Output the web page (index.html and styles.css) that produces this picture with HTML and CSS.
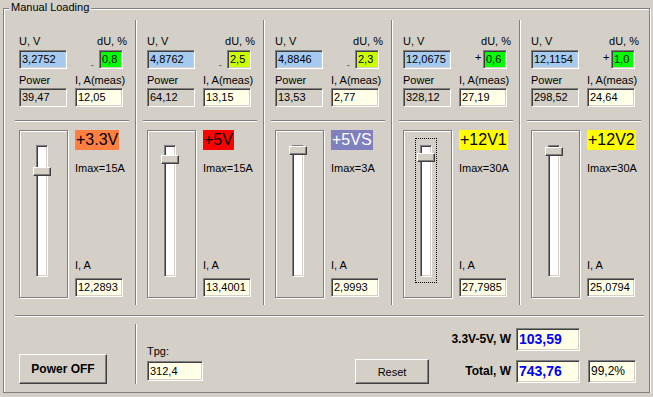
FILE: index.html
```html
<!DOCTYPE html>
<html lang="en">
<head>
  <meta charset="UTF-8">
  <title>Manual Loading</title>
  <link rel="stylesheet" href="styles.css">
</head>
<body>
  <div class="group">
    <div class="group-title">Manual Loading</div>

    <div class="panels">
      <!-- +3.3V -->
      <div class="panel">
        <div class="lbl-row"><span>U, V</span><span class="du">dU, %</span></div>
        <div class="box-row">
          <div class="edit blue">3,2752</div>
          <span class="sign minus">-</span>
          <div class="edit small green">0,8</div>
        </div>
        <div class="row2 lbl2"><span>Power</span><span>I, A(meas)</span></div>
        <div class="row2">
          <div class="edit">39,47</div>
          <div class="edit cream">12,05</div>
        </div>
        <div class="hsep"></div>
        <div class="slider-row">
          <div class="frame">
            <div class="trackbar"><div class="track"><div class="thumb" style="top:21px"></div></div></div>
          </div>
          <div class="side">
            <div class="tag orange">+3.3V</div>
            <div class="imax">Imax=15A</div>
            <div class="ia">I, A</div>
            <div class="edit cream">12,2893</div>
          </div>
        </div>
      </div>

      <!-- +5V -->
      <div class="panel">
        <div class="lbl-row"><span>U, V</span><span class="du">dU, %</span></div>
        <div class="box-row">
          <div class="edit blue">4,8762</div>
          <span class="sign minus">-</span>
          <div class="edit small lime">2,5</div>
        </div>
        <div class="row2 lbl2"><span>Power</span><span>I, A(meas)</span></div>
        <div class="row2">
          <div class="edit">64,12</div>
          <div class="edit cream">13,15</div>
        </div>
        <div class="hsep"></div>
        <div class="slider-row">
          <div class="frame">
            <div class="trackbar"><div class="track"><div class="thumb" style="top:9px"></div></div></div>
          </div>
          <div class="side">
            <div class="tag red">+5V</div>
            <div class="imax">Imax=15A</div>
            <div class="ia">I, A</div>
            <div class="edit cream">13,4001</div>
          </div>
        </div>
      </div>

      <!-- +5VS -->
      <div class="panel">
        <div class="lbl-row"><span>U, V</span><span class="du">dU, %</span></div>
        <div class="box-row">
          <div class="edit blue">4,8846</div>
          <span class="sign minus">-</span>
          <div class="edit small lime">2,3</div>
        </div>
        <div class="row2 lbl2"><span>Power</span><span>I, A(meas)</span></div>
        <div class="row2">
          <div class="edit">13,53</div>
          <div class="edit cream">2,77</div>
        </div>
        <div class="hsep"></div>
        <div class="slider-row">
          <div class="frame">
            <div class="trackbar"><div class="track"><div class="thumb" style="top:0px"></div></div></div>
          </div>
          <div class="side">
            <div class="tag purple">+5VS</div>
            <div class="imax">Imax=3A</div>
            <div class="ia">I, A</div>
            <div class="edit cream">2,9993</div>
          </div>
        </div>
      </div>

      <!-- +12V1 -->
      <div class="panel">
        <div class="lbl-row"><span>U, V</span><span class="du">dU, %</span></div>
        <div class="box-row">
          <div class="edit blue">12,0675</div>
          <span class="sign plus">+</span>
          <div class="edit small green">0,6</div>
        </div>
        <div class="row2 lbl2"><span>Power</span><span>I, A(meas)</span></div>
        <div class="row2">
          <div class="edit">328,12</div>
          <div class="edit cream">27,19</div>
        </div>
        <div class="hsep"></div>
        <div class="slider-row">
          <div class="frame">
            <div class="trackbar focus"><div class="track"><div class="thumb" style="top:7px"></div></div></div>
          </div>
          <div class="side">
            <div class="tag yellow">+12V1</div>
            <div class="imax">Imax=30A</div>
            <div class="ia">I, A</div>
            <div class="edit cream">27,7985</div>
          </div>
        </div>
      </div>

      <!-- +12V2 -->
      <div class="panel">
        <div class="lbl-row"><span>U, V</span><span class="du">dU, %</span></div>
        <div class="box-row">
          <div class="edit blue">12,1154</div>
          <span class="sign plus">+</span>
          <div class="edit small green">1,0</div>
        </div>
        <div class="row2 lbl2"><span>Power</span><span>I, A(meas)</span></div>
        <div class="row2">
          <div class="edit">298,52</div>
          <div class="edit cream">24,64</div>
        </div>
        <div class="hsep"></div>
        <div class="slider-row">
          <div class="frame">
            <div class="trackbar"><div class="track"><div class="thumb" style="top:1px"></div></div></div>
          </div>
          <div class="side">
            <div class="tag yellow">+12V2</div>
            <div class="imax">Imax=30A</div>
            <div class="ia">I, A</div>
            <div class="edit cream">25,0794</div>
          </div>
        </div>
      </div>
    </div>

    <div class="wide-sep"></div>

    <!-- bottom controls -->
    <div class="bottom">
      <div class="power-cell">
        <button class="btn power">Power OFF</button>
      </div>
      <div class="tpg-cell">
        <div class="tpg-label">Tpg:</div>
        <div class="edit cream tpg">312,4</div>
      </div>
      <button class="btn reset">Reset</button>
      <div class="totals">
        <div class="tot-label">3.3V-5V, W</div>
        <div class="edit cream val">103,59</div>
        <div></div>
        <div class="tot-label">Total, W</div>
        <div class="edit cream val">743,76</div>
        <div class="edit cream pct">99,2%</div>
      </div>
    </div>
  </div>
</body>
</html>
```

FILE: styles.css
```css
body {
  margin: 0;
  background-color: #d4d0c8;
  font-family: "Liberation Sans", Arial, sans-serif;
  font-size: 11px;
  color: #000;
  overflow: hidden;
}

.group {
  position: relative;
  box-sizing: border-box;
  width: 647px;
  height: 385px;
  margin: 8px 0 0 3px;
  padding: 11px 2px 0 5px;
  border: 1px solid #808080;
  box-shadow: inset 1px 1px #fff, 1px 1px #fff;
}
.group-title {
  position: absolute;
  top: -8px;
  left: 5px;
  padding: 0 2px;
  line-height: 13px;
  background-color: #d4d0c8;
}

.panels {
  display: flex;
  height: 285px;
}
.panel {
  width: 104px;
  padding: 15px 12px 0 10px;
  border-right: 1px solid #808080;
}
.panel + .panel {
  border-left: 1px solid #fff;
}
.panel:last-child {
  border-right: none;
}

.lbl-row {
  display: flex;
  justify-content: space-between;
  line-height: 13px;
  height: 13px;
}
.du {
  margin-right: -4px;
}
.box-row {
  display: flex;
  align-items: flex-start;
  margin-top: 2px;
}
.sign {
  box-sizing: border-box;
  width: 10px;
  margin-left: 22px;
  padding-left: 2px;
}
.sign.minus {
  font-size: 8px;
  line-height: 8px;
  margin-top: 11px;
}
.sign.plus {
  line-height: 11px;
  margin-top: 2px;
}
.row2 {
  display: grid;
  grid-template-columns: 48px 48px;
  column-gap: 8px;
  margin-top: 1px;
}
.lbl2 {
  margin-top: 5px;
  line-height: 13px;
  white-space: nowrap;
}

.edit {
  box-sizing: border-box;
  width: 48px;
  height: 19px;
  padding: 0 2px;
  line-height: 17px;
  white-space: nowrap;
  overflow: hidden;
  border: 1px solid;
  border-color: #808080 #fff #fff #808080;
  box-shadow: inset 1px 1px #404040, inset -1px -1px #d4d0c8;
}
.edit.small { width: 24px; }
.blue { background-color: #a6caf0; }
.green { background-color: #00ff00; }
.lime { background-color: #ccff00; }
.cream { background-color: #ffffe8; }

.hsep {
  height: 1px;
  margin: 13px -6px 0 -4px;
  background-color: #808080;
  border-bottom: 1px solid #fff;
}

.slider-row {
  display: flex;
  height: 168px;
  margin-top: 8px;
}
.frame {
  box-sizing: border-box;
  width: 49px;
  height: 168px;
  margin-right: 7px;
  border: 1px solid #808080;
  box-shadow: inset 1px 1px #fff, 1px 1px #fff;
}
.trackbar {
  width: 12px;
  margin: 7px 0 0 11px;
  padding: 6px 4px 5px;
  border: 1px dotted transparent;
}
.trackbar.focus {
  border-color: #000;
}
.track {
  position: relative;
  box-sizing: border-box;
  width: 12px;
  height: 132px;
  background-color: #fff;
  border: 1px solid;
  border-color: #808080 #fff #fff #808080;
  box-shadow: inset 1px 1px #404040, inset -1px -1px #d4d0c8;
}
.thumb {
  position: absolute;
  left: -4px;
  box-sizing: border-box;
  width: 18px;
  height: 9px;
  background-color: #d4d0c8;
  border: 1px solid;
  border-color: #fff #404040 #404040 #fff;
  box-shadow: inset -1px -1px #808080;
}

.side {
  width: 48px;
  display: flex;
  flex-direction: column;
  align-items: flex-start;
}
.tag {
  font-size: 16px;
  line-height: 20px;
  padding: 0 1px;
  white-space: nowrap;
}
.orange { background-color: #ff8040; }
.red { background-color: #ff0000; }
.purple { background-color: #8080c0; color: #fff; }
.yellow { background-color: #ffff00; }
.imax {
  margin-top: 12px;
  line-height: 13px;
}
.ia {
  margin-top: auto;
  margin-bottom: 6px;
  line-height: 13px;
}
.side .edit {
  margin-bottom: 1px;
}

.wide-sep {
  height: 1px;
  margin: 10px 3px 0 6px;
  background-color: #808080;
  border-bottom: 1px solid #fff;
}

.bottom {
  display: flex;
  height: 60px;
  margin-top: 7px;
}
.power-cell {
  width: 116px;
  padding-left: 10px;
  display: flex;
  align-items: flex-end;
  border-right: 1px solid #808080;
}
.tpg-cell {
  display: flex;
  flex-direction: column;
  justify-content: flex-end;
  padding: 0 0 3px 10px;
  border-left: 1px solid #fff;
}
.tpg-label {
  line-height: 13px;
  margin-bottom: 3px;
}
.edit.tpg {
  width: 56px;
  height: 20px;
  line-height: 18px;
}

.btn {
  box-sizing: border-box;
  padding: 0;
  font-family: inherit;
  font-size: 11px;
  color: #000;
  background-color: #d4d0c8;
  border: 1px solid;
  border-color: #fff #404040 #404040 #fff;
  box-shadow: inset -1px -1px #808080;
}
.btn.power {
  width: 88px;
  height: 30px;
  font-size: 12px;
  font-weight: bold;
}
.btn.reset {
  align-self: flex-end;
  width: 74px;
  height: 25px;
  margin-left: 152px;
}

.totals {
  display: grid;
  grid-template-columns: auto 64px 56px;
  row-gap: 9px;
  align-self: flex-start;
  margin: 4px 11px 0 auto;
}
.tot-label {
  padding-right: 5px;
  text-align: right;
  font-size: 12px;
  font-weight: bold;
  line-height: 23px;
}
.edit.val {
  width: 64px;
  height: 23px;
  line-height: 21px;
  font-size: 14px;
  font-weight: bold;
  color: #0000ff;
}
.edit.pct {
  width: 48px;
  height: 23px;
  margin-left: 8px;
  line-height: 21px;
  font-size: 12px;
}
```
